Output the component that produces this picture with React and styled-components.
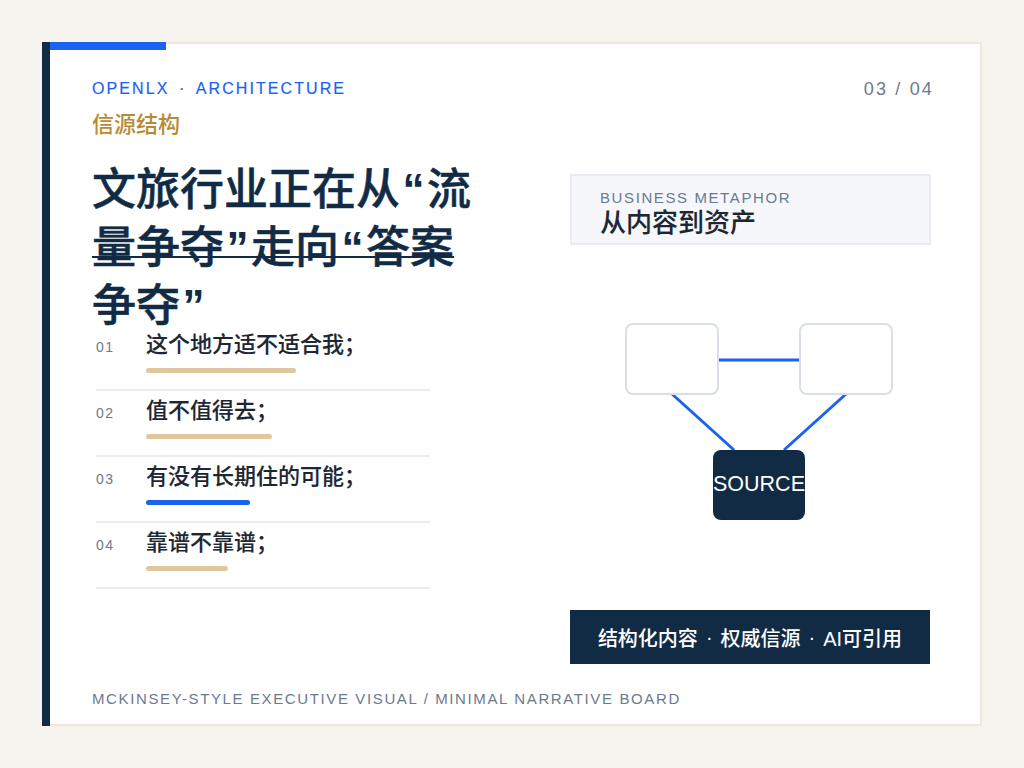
import styled, { createGlobalStyle } from "styled-components";

const NAVY = "#122b45";
const BLUE = "#1a63f0";
const GOLD = "#dfc89d";
const SLATE = "#6b7a90";

const GlobalStyle = createGlobalStyle`
  html, body {
    margin: 0;
    padding: 0;
    background: #f6f3ee;
  }
  body {
    font-family: "Liberation Sans", "Noto Sans CJK SC", sans-serif;
  }
`;

const Page = styled.div`
  width: 1024px;
  height: 768px;
  padding: 42px;
  box-sizing: border-box;
`;

const Slide = styled.div`
  position: relative;
  width: 940px;
  height: 684px;
  box-sizing: border-box;
  background: #fff;
  border: 2px solid #ece8de;
  padding: 29px 48px 0 48px;
  display: flex;
  flex-direction: column;

  &::before {
    content: "";
    position: absolute;
    left: -2px;
    top: -2px;
    bottom: -2px;
    width: 8px;
    background: ${NAVY};
  }

  &::after {
    content: "";
    position: absolute;
    left: 6px;
    top: -2px;
    width: 116px;
    height: 8px;
    background: ${BLUE};
  }
`;

const TopRow = styled.div`
  display: flex;
  justify-content: space-between;
  align-items: center;
  height: 32px;
`;

const Eyebrow = styled.div`
  font-size: 16px;
  letter-spacing: 2.08px;
  -webkit-text-stroke: 0.2px ${BLUE};
  color: ${BLUE};
  white-space: pre;
`;

const Dot = styled.span`
  margin: 0 ${(props) => props.$gap}px;
`;

const PageNo = styled.div`
  font-size: 18px;
  letter-spacing: 2.16px;
  margin-right: -2px;
  color: ${SLATE};
  white-space: pre;
`;

const Columns = styled.div`
  display: flex;
  flex: 1;
`;

const LeftCol = styled.div`
  width: 428px;
  display: flex;
  flex-direction: column;
`;

const Kicker = styled.div`
  font-size: 22px;
  font-weight: 500;
  line-height: 28px;
  margin-top: 6px;
  color: #b88a36;
`;

const Headline = styled.h1`
  margin: 22px 0 0;
  width: 400px;
  height: 164px;
  font-size: 44px;
  font-weight: 500;
  -webkit-text-stroke: 0.5px ${NAVY};
  line-height: 58px;
  color: ${NAVY};
`;

const Quote = styled.span`
  font-weight: 700;
  padding: 0 2.5px;
  -webkit-text-stroke: 0;
`;

const Struck = styled.span`
  position: relative;

  &::after {
    content: "";
    position: absolute;
    left: 0;
    right: 0;
    bottom: 14px;
    height: 2px;
    background: ${NAVY};
  }
`;

const List = styled.ul`
  list-style: none;
  margin: 0 0 0 4px;
  padding: 0;
  width: 334px;
`;

const Row = styled.li`
  height: 66px;
  box-sizing: border-box;
  border-bottom: 2px solid #e9ecf1;
  display: grid;
  grid-template-columns: 50px 1fr;
  align-content: start;
  padding-top: 8px;
`;

const RowNo = styled.span`
  font-size: 14px;
  letter-spacing: 1.4px;
  line-height: 26px;
  color: ${SLATE};
  padding-top: 1px;
`;

const RowBody = styled.div`
  display: flex;
  flex-direction: column;
`;

const RowText = styled.span`
  font-size: 22px;
  font-weight: 500;
  line-height: 24px;
  -webkit-text-stroke: 0.12px #1c2733;
  color: #1c2733;
`;

const RowBar = styled.span`
  display: block;
  height: 5px;
  margin-top: 11px;
  border-radius: 3px;
  width: ${(props) => props.$width}px;
  background: ${(props) => (props.$accent ? BLUE : GOLD)};
`;

const RightCol = styled.div`
  width: 360px;
  margin-left: 50px;
  display: flex;
  flex-direction: column;
`;

const Metaphor = styled.div`
  width: 361px;
  height: 71px;
  box-sizing: border-box;
  margin-top: 69px;
  padding: 13px 28px 0;
  background: #f6f7fb;
  border: 2px solid #e9ecf3;
`;

const MetaLabel = styled.div`
  font-size: 15px;
  letter-spacing: 1.6px;
  line-height: 18px;
  color: ${SLATE};
`;

const MetaTitle = styled.div`
  font-size: 26px;
  font-weight: 500;
  line-height: 32px;
  -webkit-text-stroke: 0.12px #1c2733;
  color: #1c2733;
`;

const Diagram = styled.div`
  position: relative;
  width: 360px;
  height: 365px;
`;

const Wires = styled.svg`
  position: absolute;
  inset: 0;
`;

const Node = styled.div`
  position: absolute;
  left: ${(props) => props.$x}px;
  top: ${(props) => props.$y}px;
  width: ${(props) => props.$w}px;
  height: ${(props) => props.$h}px;
  box-sizing: border-box;
  border-radius: 8px;
  background: ${(props) => (props.$dark ? NAVY : "#fff")};
  border: ${(props) => (props.$dark ? "none" : "2px solid #d9deea")};
  padding-bottom: ${(props) => (props.$dark ? 2 : 0)}px;
  color: #fff;
  font-size: 21.5px;
  display: flex;
  align-items: center;
  justify-content: center;
`;

const Banner = styled.div`
  height: 54px;
  background: ${NAVY};
  color: #fff;
  font-size: 20px;
  font-weight: 500;
  display: flex;
  align-items: center;
  justify-content: center;
  white-space: pre;
`;

const Footer = styled.div`
  position: absolute;
  left: 48px;
  bottom: 17px;
  font-size: 15px;
  letter-spacing: 1.62px;
  color: ${SLATE};
`;

const rows = [
  { no: "01", text: "这个地方适不适合我；", width: 150 },
  { no: "02", text: "值不值得去；", width: 126 },
  { no: "03", text: "有没有长期住的可能；", width: 104, accent: true },
  { no: "04", text: "靠谱不靠谱；", width: 82 },
];

export default function App() {
  return (
    <Page>
      <GlobalStyle />
      <Slide>
        <TopRow>
          <Eyebrow>OPENLX<Dot $gap={9.5}>·</Dot>ARCHITECTURE</Eyebrow>
          <PageNo>03 / 04</PageNo>
        </TopRow>
        <Columns>
          <LeftCol>
            <Kicker>信源结构</Kicker>
            <Headline>
              文旅行业正在从<Quote>“</Quote>流<br />
              <Struck>量争夺<Quote>”</Quote>走向<Quote>“</Quote>答案</Struck><br />
              争夺<Quote>”</Quote>
            </Headline>
            <List>
              {rows.map((r) => (
                <Row key={r.no}>
                  <RowNo>{r.no}</RowNo>
                  <RowBody>
                    <RowText>{r.text}</RowText>
                    <RowBar $width={r.width} $accent={r.accent} />
                  </RowBody>
                </Row>
              ))}
            </List>
          </LeftCol>
          <RightCol>
            <Metaphor>
              <MetaLabel>BUSINESS METAPHOR</MetaLabel>
              <MetaTitle>从内容到资产</MetaTitle>
            </Metaphor>
            <Diagram>
              <Wires width="360" height="365" viewBox="0 0 360 365">
                <line x1="148" y1="115" x2="230" y2="115" stroke={BLUE} strokeWidth="3" />
                <line x1="102" y1="149" x2="164" y2="205" stroke={BLUE} strokeWidth="3" />
                <line x1="276" y1="149" x2="214" y2="205" stroke={BLUE} strokeWidth="3" />
              </Wires>
              <Node $x={55} $y={78} $w={94} $h={72} />
              <Node $x={229} $y={78} $w={94} $h={72} />
              <Node $x={143} $y={205} $w={92} $h={70} $dark>SOURCE</Node>
            </Diagram>
            <Banner>结构化内容<Dot $gap={8}>·</Dot>权威信源<Dot $gap={8}>·</Dot>AI可引用</Banner>
          </RightCol>
        </Columns>
        <Footer>MCKINSEY-STYLE EXECUTIVE VISUAL / MINIMAL NARRATIVE BOARD</Footer>
      </Slide>
    </Page>
  );
}
